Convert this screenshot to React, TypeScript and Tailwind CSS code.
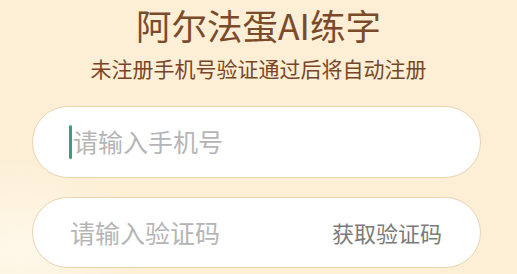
import React from "react";

const font = { fontFamily: '"Noto Sans CJK SC", "Noto Sans", sans-serif' };

const App: React.FC = () => {
  return (
    <div
      className="relative w-[517px] h-[274px] overflow-hidden bg-[#fcefd6] bg-[radial-gradient(ellipse_120px_90px_at_20px_250px,#fff8ea,transparent)]"
      style={font}
    >
      <div className="flex flex-col items-center pt-[2px]">
        <h1 className="text-[35.5px] leading-[46px] text-[#7b4a2b]">
          阿尔法蛋AI练字
        </h1>
        <p className="mt-[6px] text-[21px] leading-[28px] text-[#7a4526]">
          未注册手机号验证通过后将自动注册
        </p>
      </div>

      <div className="flex flex-col gap-[19px] ml-[32px] mt-[24px] w-[449px]">
        <div className="flex items-center h-[72px] rounded-full bg-white border-[1.5px] border-[#e9d4b0] pl-[36px] pr-[36px]">
          <span className="w-[3px] h-[34px] bg-[#3d9a86] rounded-sm mr-[1px]" />
          <span className="text-[25px] text-[#b5b5b5]">请输入手机号</span>
        </div>
        <div className="flex items-center justify-between h-[71px] rounded-full bg-white border-[1.5px] border-[#e9d4b0] pl-[37px] pr-[38px]">
          <span className="text-[25px] text-[#b5b5b5]">请输入验证码</span>
          <span className="text-[22px] text-[#7a7a7a]">获取验证码</span>
        </div>
      </div>
    </div>
  );
};

export default App;
